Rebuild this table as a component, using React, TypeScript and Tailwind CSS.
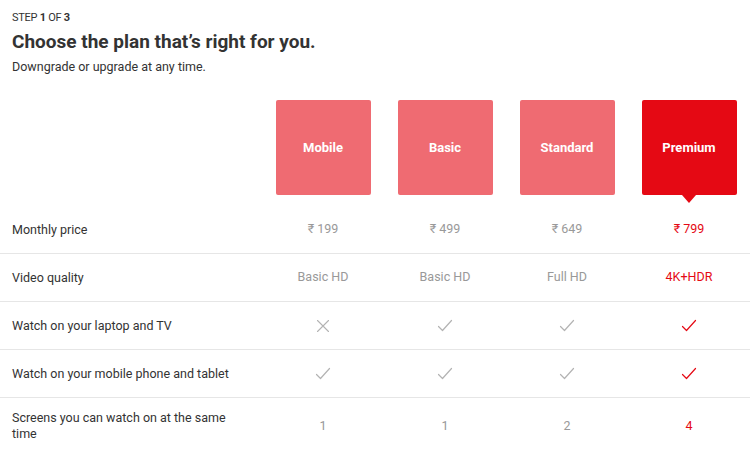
import * as React from "react"

type Cell = string | boolean | null

interface Row {
  label: React.ReactNode
  values: Cell[]
  tall?: boolean
}

const plans = ["Mobile", "Basic", "Standard", "Premium"]

const rows: Row[] = [
  { label: "Monthly price", values: ["₹ 199", "₹ 499", "₹ 649", "₹ 799"] },
  { label: "Video quality", values: ["Basic HD", "Basic HD", "Full HD", "4K+HDR"] },
  { label: "Watch on your laptop and TV", values: [false, true, true, true] },
  { label: "Watch on your mobile phone and tablet", values: [true, true, true, true] },
  {
    label: (
      <>
        Screens you can watch on at the same
        <br />
        time
      </>
    ),
    values: ["1", "1", "2", "4"],
    tall: true,
  },
]

function Check({ red }: { red?: boolean }) {
  return (
    <svg width="16" height="14" viewBox="0 0 16 14" fill="none">
      <path
        d="M1.5 7.5 L5.5 11.5 L14.5 1.5"
        stroke={red ? "#e50914" : "#b3b3b3"}
        strokeWidth="1.2"
        strokeLinecap="round"
        strokeLinejoin="round"
      />
    </svg>
  )
}

function Cross() {
  return (
    <svg width="14" height="14" viewBox="0 0 14 14" fill="none">
      <path d="M1.5 1.5 L12.5 12.5 M12.5 1.5 L1.5 12.5" stroke="#b3b3b3" strokeWidth="1.1" strokeLinecap="round" />
    </svg>
  )
}

function Value({ value, selected }: { value: Cell; selected: boolean }) {
  if (value === true) return <Check red={selected} />
  if (value === false) return <Cross />
  return (
    <span className={selected ? "text-[#e50914]" : "text-[#999]"}>{value}</span>
  )
}

export default function App() {
  return (
    <div
      className="h-[450px] w-[752px] overflow-hidden bg-white text-[#333]"
      style={{ fontFamily: "Roboto, 'Liberation Sans', sans-serif" }}
    >
      <div className="px-3 pt-[11px]">
        <div className="text-[11px] leading-[14px] tracking-tight text-[#333]">
          STEP <span className="font-bold">1</span> OF <span className="font-bold">3</span>
        </div>
        <h1 className="mt-[5px] text-[19px] font-bold leading-[24px] text-[#333]">
          Choose the plan that’s right for you.
        </h1>
        <p className="mt-[5px] text-[12.5px] leading-[16px] text-[#333]">
          Downgrade or upgrade at any time.
        </p>
      </div>

      <div className="mt-[25px] flex">
        <div className="w-[262px] shrink-0" />
        {plans.map((p, i) => (
          <div key={p} className="flex w-[122px] shrink-0 justify-center">
            <div
              className={
                "relative flex h-[95px] w-[95px] items-center justify-center rounded-[2px] text-[13px] font-bold text-white " +
                (i === 3 ? "bg-[#e50914]" : "bg-[#ef6b72]")
              }
            >
              {p}
              {i === 3 && (
                <div className="absolute left-1/2 top-full -translate-x-1/2 border-x-[7px] border-t-[8px] border-x-transparent border-t-[#e50914]" />
              )}
            </div>
          </div>
        ))}
      </div>

      <div className="mt-[11px] w-[750px]">
        {rows.map((r, ri) => (
          <div
            key={ri}
            className={
              "flex items-center " +
              (r.tall ? "h-[54px] pt-[2px]" : "h-[48px] border-b border-[#e6e6e6]")
            }
          >
            <div className="w-[262px] shrink-0 pl-3 text-[12.5px] leading-[16px] text-[#333]">
              {r.label}
            </div>
            {r.values.map((v, i) => (
              <div
                key={i}
                className="flex w-[122px] shrink-0 justify-center text-[12.5px] text-[#999]"
              >
                <Value value={v} selected={i === 3} />
              </div>
            ))}
          </div>
        ))}
      </div>
    </div>
  )
}
